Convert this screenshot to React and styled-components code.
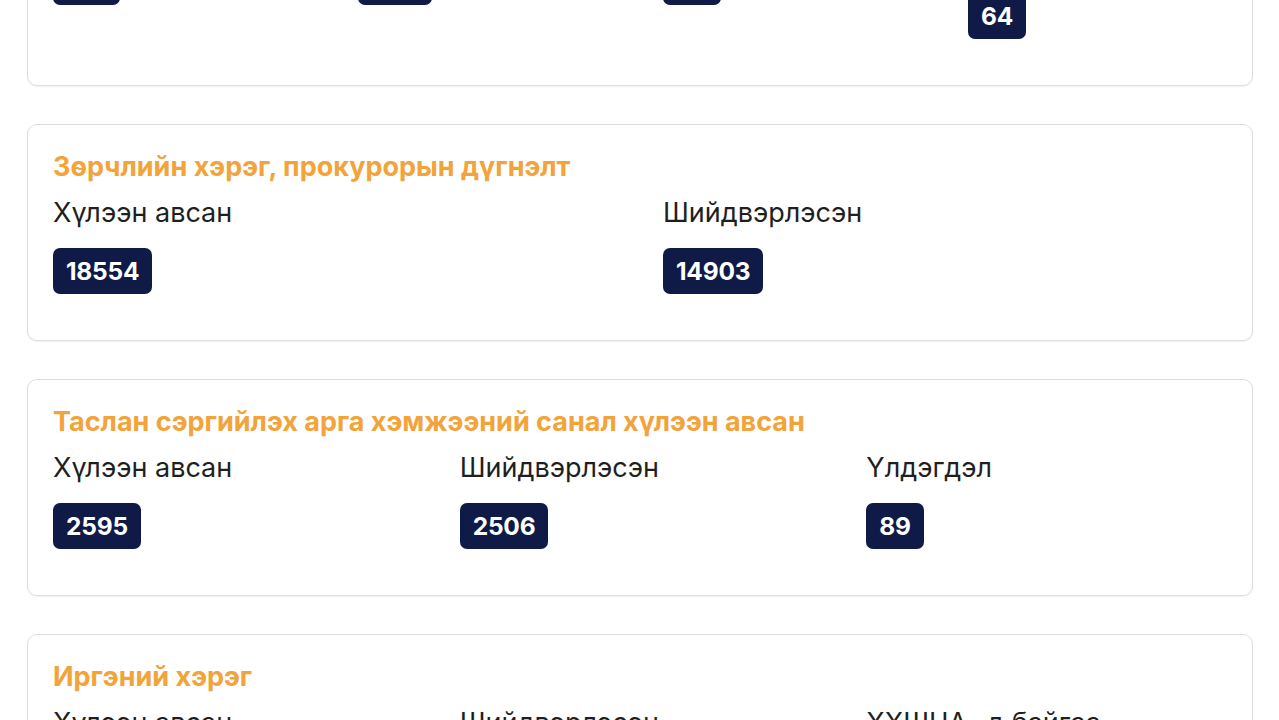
import React from "react";
import styled, { createGlobalStyle } from "styled-components";

const Global = createGlobalStyle`
  html, body { margin: 0; padding: 0; background: #ffffff; overflow: hidden; }
  body { font-family: Inter, "Noto Sans", sans-serif; }
  * { box-sizing: border-box; }
`;

const Page = styled.main`
  display: flex;
  flex-direction: column;
  gap: 38px;
  padding: 0 26px 40px 27px;
  margin-top: -165px;
`;

const Card = styled.section`
  background: #fff;
  border: 1px solid #dedede;
  border-radius: 10px;
  box-shadow: 0 1px 2px rgba(0, 0, 0, 0.06);
  padding: 27px 25px 46px 25px;
`;

const Title = styled.h2`
  margin: 0 0 14px 0;
  font-family: Inter, "Noto Sans", sans-serif;
  font-weight: 700;
  font-size: 27px;
  line-height: 30px;
  color: #f2a33a;
`;

const Grid = styled.div`
  display: grid;
  grid-template-columns: repeat(${(p) => p.$cols}, 1fr);
  column-gap: 46px;
`;

const Col = styled.div`
  display: flex;
  flex-direction: column;
  align-items: flex-start;
`;

const Label = styled.div`
  font-family: Inter, "Noto Sans", sans-serif;
  font-weight: 400;
  font-size: 27px;
  line-height: 34px;
  color: #1f1f1f;
  margin-bottom: 18px;
`;

const Badge = styled.span`
  display: inline-flex;
  align-items: center;
  justify-content: center;
  height: 46px;
  padding: 0 13px;
  border-radius: 7px;
  background: #0f1a46;
  color: #fff;
  font-family: Inter, "Noto Sans", sans-serif;
  font-weight: 700;
  font-size: 24.5px;
  letter-spacing: -0.2px;
`;

const cards = [
  {
    title: "Эрүүгийн хэрэг, прокурорын хяналт",
    cols: 4,
    items: [
      ["Хүлээн авсан", "512"],
      ["Шийдвэрлэсэн", "448"],
      ["Үлдэгдэл", "64"],
      ["Хяналтаар шийдвэрлэсэн", "64"],
    ],
  },
  {
    title: "Зөрчлийн хэрэг, прокурорын дүгнэлт",
    cols: 2,
    items: [
      ["Хүлээн авсан", "18554"],
      ["Шийдвэрлэсэн", "14903"],
    ],
  },
  {
    title: "Таслан сэргийлэх арга хэмжээний санал хүлээн авсан",
    cols: 3,
    items: [
      ["Хүлээн авсан", "2595"],
      ["Шийдвэрлэсэн", "2506"],
      ["Үлдэгдэл", "89"],
    ],
  },
  {
    title: "Иргэний хэрэг",
    cols: 3,
    items: [
      ["Хүлээн авсан", "1204"],
      ["Шийдвэрлэсэн", "1150"],
      ["ХХШЦА -д байгаа", "54"],
    ],
  },
];

export default function App() {
  return (
    <>
      <Global />
      <Page>
        {cards.map((c) => (
          <Card key={c.title}>
            <Title>{c.title}</Title>
            <Grid $cols={c.cols}>
              {c.items.map(([label, value]) => (
                <Col key={label}>
                  <Label>{label}</Label>
                  <Badge>{value}</Badge>
                </Col>
              ))}
            </Grid>
          </Card>
        ))}
      </Page>
    </>
  );
}
